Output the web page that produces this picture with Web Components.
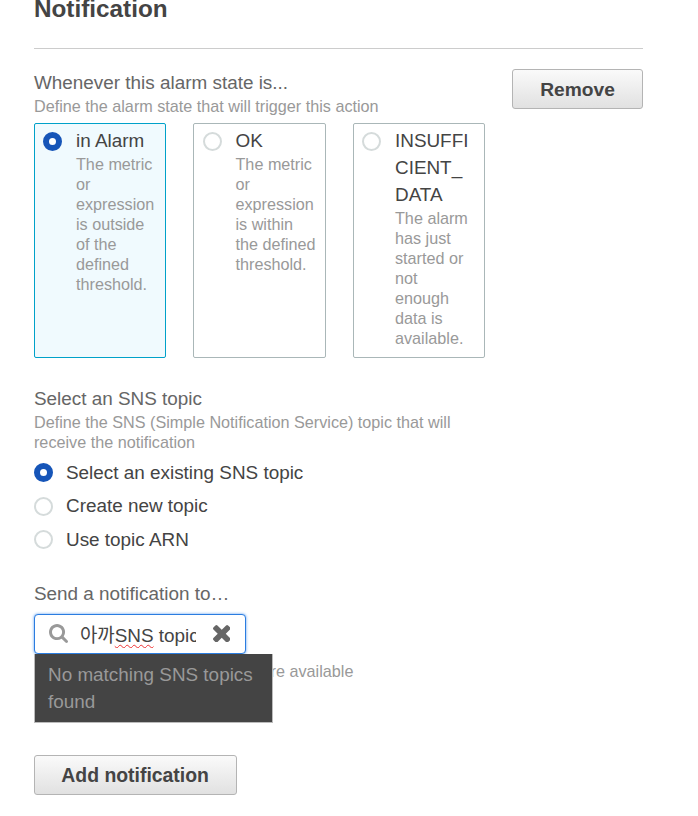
<!DOCTYPE html>
<html lang="en"><head><meta charset="utf-8"><title>Notification</title>
<style>
html,body{margin:0;padding:0;background:#fff;height:816px;overflow:hidden}
body{font-family:"Liberation Sans",Arial,"Noto Sans CJK KR",sans-serif;}
</style></head><body>
<template id="t-radio"><style>
:host{display:block;flex:none;width:19px;height:19px;box-sizing:border-box;border-radius:50%;border:2px solid #d5dbdb;background:#fff}
:host([checked]){border:6px solid #1655b8}
</style></template>

<template id="t-btn"><style>
:host{display:flex;align-items:center;justify-content:center;box-sizing:border-box;height:40px;padding-top:1px;border:1px solid #b4b4b4;border-radius:3px;background:linear-gradient(#fafafa,#e1e1e1);color:#444;font-size:19.2px;font-weight:700}
</style><slot></slot></template>

<template id="t-head"><style>
:host{display:block}
.l{font-size:18.9px;line-height:25px;color:#666;padding-left:.4px}
.d{font-size:16.2px;line-height:20px;color:#999;margin-top:1px;padding-left:.4px}
</style><div class="l"><slot name="label"></slot></div><div class="d"><slot name="desc"></slot></div></template>

<template id="t-card"><style>
:host{display:flex;box-sizing:border-box;width:132.5px;height:235px;padding:8px 8.11px 0 8.6px;gap:13.8px;border:1px solid #aab7b8;border-radius:2px;background:#fff}
:host([checked]){border-color:#00a1c9;background:#f0fafe}
.b{min-width:0;flex:1}
.t{font-size:18.9px;line-height:27px;color:#444;margin-top:-5px;overflow-wrap:anywhere}
.d{font-size:16.2px;line-height:20px;color:#999}
</style><x-radio></x-radio><div class="b"><div class="t"><slot name="title"></slot></div><div class="d"><slot name="desc"></slot></div></div></template>

<template id="t-option"><style>
:host{display:flex;align-items:center;gap:13.4px;height:33.5px;font-size:18.9px;color:#444}
</style><x-radio></x-radio><span><slot></slot></span></template>

<template id="t-search"><style>
:host{display:block;position:relative;height:40px;width:212px}
.box{box-sizing:border-box;height:40px;width:212px;display:flex;align-items:center;padding-left:14px;border:1px solid #2b7de0;border-radius:4px;background:#fff;box-shadow:0 0 3px #5b9df0}
svg{flex:none;display:block}
.v{margin-left:12.4px;width:116px;overflow:hidden;white-space:nowrap;font-size:18.9px;color:#444;line-height:24px;padding-top:4px}
.x{margin-left:16.6px}
.menu{position:absolute;left:0;top:40px;width:239px;height:69px;box-sizing:border-box;padding:7px 13.4px;background:#444;border:1px solid #bbb;border-top:0;font-size:18.9px;line-height:27px;color:#999;z-index:2}
</style><div class="box">
<svg width="19" height="19" viewBox="64 128 1664 1664"><path fill="#999" d="M1216 832q0-185-131.5-316.5t-316.5-131.5-316.5 131.5-131.5 316.5 131.5 316.5 316.5 131.5 316.5-131.5 131.5-316.5zm512 832q0 52-38 90t-90 38q-54 0-90-38l-343-342q-179 124-399 124-143 0-273.5-55.5t-225-150-150-225-55.5-273.5 55.5-273.5 150-225 225-150 273.5-55.5 273.5 55.5 225 150 150 225 55.5 273.5q0 220-124 399l343 343q37 37 37 90z"/></svg>
<div class="v"><slot></slot></div>
<svg class="x" width="17.5" height="17.5" viewBox="110 178 1188 1188"><path fill="#666" d="M1298 1134q0 40-28 68l-136 136q-28 28-68 28t-68-28l-294-294-294 294q-28 28-68 28t-68-28l-136-136q-28-28-28-68t28-68l294-294-294-294q-28-28-28-68t28-68l136-136q28-28 68-28t68 28l294 294 294-294q28-28 68-28t68 28l136 136q28 28 28 68t-28 68l-294 294 294 294q28 28 28 68z"/></svg>
</div><div class="menu"><slot name="menu"></slot></div></template>

<template id="t-page"><style>
:host{display:block;box-sizing:border-box;width:643px;padding-left:33.6px;font-family:"Liberation Sans",Arial,"Noto Sans CJK KR",sans-serif}
h2{margin:-6px 0 0;font-size:24.3px;line-height:30px;font-weight:700;color:#444;padding-left:.4px}
hr{margin:24px 0 0;border:0;border-top:1px solid #ccc;height:0}
.top{display:flex;justify-content:space-between;margin-top:22px;align-items:flex-start}
.top x-head{margin-top:-1px}
.top .rm{width:131px;margin-top:-2px}
.cards{display:flex;gap:27px;margin-top:7px}
.sns{margin-top:28px;width:450px}
.opts{margin-top:4px}
.send{margin-top:25px;font-size:18.9px;line-height:24px;color:#666;padding-left:.4px}
x-search{margin-top:8px}
.note{font-size:16.2px;line-height:20px;color:#999;margin-top:7px;padding-left:.4px}
.add{width:203px;margin-top:74px;padding-top:2px;font-size:19.4px}
u{text-decoration:underline wavy #e33 1px;text-underline-offset:2px}
</style>
<h2>Notification</h2><hr>
<div class="top"><x-head><span slot="label">Whenever this alarm state is...</span><span slot="desc">Define the alarm state that will trigger this action</span></x-head><x-btn class="rm">Remove</x-btn></div>
<div class="cards">
<x-card checked><span slot="title">in Alarm</span><span slot="desc">The metric or expression is outside of the defined threshold.</span></x-card>
<x-card><span slot="title">OK</span><span slot="desc">The metric or expression is within the defined threshold.</span></x-card>
<x-card><span slot="title">INSUFFI&#8203;CIENT_&#8203;DATA</span><span slot="desc">The alarm has just started or not enough data is available.</span></x-card>
</div>
<x-head class="sns"><span slot="label">Select an SNS topic</span><span slot="desc">Define the SNS (Simple Notification Service) topic that will receive the notification</span></x-head>
<div class="opts"><x-option checked>Select an existing SNS topic</x-option><x-option>Create new topic</x-option><x-option>Use topic ARN</x-option></div>
<div class="send">Send a notification to…</div>
<x-search><span lang="ko">아까</span><u>SNS</u> topic<span slot="menu">No matching SNS topics found</span></x-search>
<div class="note">Only email lists for this account are available</div>
<x-btn class="add">Add notification</x-btn>
</template>

<x-page></x-page>
<script>
function reg(name,id,after){
  customElements.define(name,class extends HTMLElement{
    constructor(){super();this.attachShadow({mode:'open'}).appendChild(document.getElementById(id).content.cloneNode(true));}
    connectedCallback(){ if(after) after(this); }
  });
}
var pass=function(el){var r=el.shadowRoot.querySelector('x-radio'); if(r&&el.hasAttribute('checked')) r.setAttribute('checked','');};
reg('x-radio','t-radio');reg('x-btn','t-btn');reg('x-head','t-head');
reg('x-card','t-card',pass);reg('x-option','t-option',pass);reg('x-search','t-search');reg('x-page','t-page');
</script>
</body></html>
